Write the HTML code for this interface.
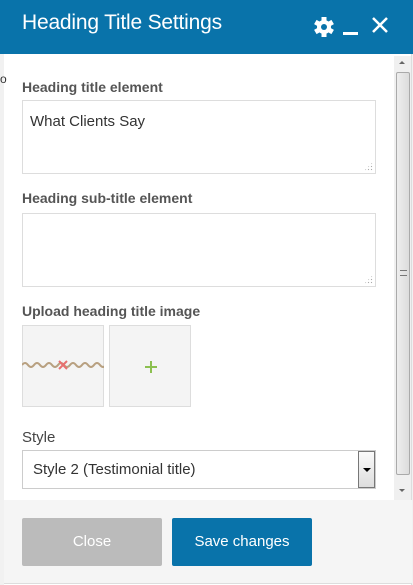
<!DOCTYPE html>
<html><head><meta charset="utf-8"><style>
*{box-sizing:border-box;margin:0;padding:0}
body{width:413px;height:585px;overflow:hidden;background:#f1f1f1;font-family:"Liberation Sans",sans-serif;position:relative}
.hdr{position:absolute;left:0;top:0;width:413px;height:54px;background:#0973aa}
.hdr h1{position:absolute;left:22px;top:11px;font-weight:normal;font-size:21px;color:#fff;letter-spacing:-0.2px}
.modal{position:absolute;left:4px;top:54px;width:408px;height:531px;background:#fff;border-right:1px solid #ddd}
.lbl{position:absolute;left:22px;font-size:14px;font-weight:bold;color:#555}
.ta{position:absolute;left:22px;width:354px;border:1px solid #ddd;background:#fff}
.grip{position:absolute;right:2px;bottom:2px;width:9px;height:9px;background:radial-gradient(circle,#aaa 0.7px,transparent 0.8px) 0 0/3px 3px;clip-path:polygon(100% 0,100% 100%,0 100%)}
.box{position:absolute;top:325px;width:82px;height:82px;background:#f4f4f4;border:1px solid #ddd}
.foot{position:absolute;left:4px;top:500px;width:408px;height:84px;background:#f5f5f5;border-bottom:1px solid #ddd}
.btn{position:absolute;top:518px;height:48px;border-radius:2px;color:#fff;font-size:15px;text-align:center;line-height:48px}
.sb{position:absolute;left:394px;top:56px;width:17px;height:444px;background:#f0f0f0}
.thumb{position:absolute;left:396px;top:72px;width:14px;height:403px;background:linear-gradient(90deg,#eee,#dcdcdc);border:1px solid #aaa;border-radius:2px}
</style></head><body>
<div class="hdr"><h1>Heading Title Settings</h1>
<svg style="position:absolute;left:313px;top:16px" width="22" height="22" viewBox="0 0 22 22"><g fill="#fff"><circle cx="11" cy="11" r="7"/><g transform="translate(11 11)"><rect x="-2.5" y="-10" width="5" height="20"/><rect x="-2.5" y="-10" width="5" height="20" transform="rotate(60)"/><rect x="-2.5" y="-10" width="5" height="20" transform="rotate(120)"/></g></g><circle cx="11" cy="11" r="3" fill="#0973aa"/></svg>
<div style="position:absolute;left:343px;top:32px;width:15px;height:3px;background:#fff"></div>
<svg style="position:absolute;left:372px;top:17px" width="16" height="16"><path d="M1 1L15 15M15 1L1 15" stroke="#fff" stroke-width="2.5"/></svg>
</div>
<div class="modal"></div>
<div style="position:absolute;left:0;top:72px;font-size:12px;color:#333">o</div>
<div class="lbl" style="top:79px">Heading title element</div>
<div class="ta" style="top:100px;height:74px"><div style="padding:12px 0 0 7px;font-size:15px;color:#333">What Clients Say</div><div class="grip"></div></div>
<div class="lbl" style="top:190px">Heading sub-title element</div>
<div class="ta" style="top:213px;height:74px"><div class="grip"></div></div>
<div class="lbl" style="top:303px">Upload heading title image</div>
<div class="box" style="left:22px"><svg width="82" height="82" style="position:absolute;left:-1px;top:-1px"><path d="M0 40 q3 -4 6 0 t6 0 t6 0 t6 0 t6 0 t6 0 t6 0 t6 0 t6 0 t6 0 t6 0 t6 0 t6 0 t6 0" stroke="#b8a080" stroke-width="2" fill="none"/><path d="M37 36l8 8M45 36l-8 8" stroke="#e87070" stroke-width="2"/></svg></div>
<div class="box" style="left:109px"><div style="position:absolute;left:35px;top:40px;width:12px;height:1.5px;background:#8cc050"></div><div style="position:absolute;left:40.3px;top:35px;width:1.5px;height:12px;background:#8cc050"></div></div>
<div class="lbl" style="top:429px;font-weight:normal;color:#444;font-size:15px">Style</div>
<div class="ta" style="top:450px;height:39px;border-color:#ccc"><div style="padding:10px 0 0 10px;font-size:15px;color:#333">Style 2 (Testimonial title)</div>
<div style="position:absolute;right:0;top:0;width:17px;height:37px;background:linear-gradient(#fafafa,#ddd);border:1px solid #777"><div style="position:absolute;left:4px;top:16px;border-left:4px solid transparent;border-right:4px solid transparent;border-top:4px solid #000"></div></div></div>
<div class="sb"></div><div class="thumb"><div style="position:absolute;left:3px;top:197px;width:7px;height:6px;border-top:1px solid #777;border-bottom:1px solid #777"></div></div>
<div style="position:absolute;left:399px;top:61px;border-left:3px solid transparent;border-right:3px solid transparent;border-bottom:3px solid #666"></div>
<div style="position:absolute;left:399px;top:489px;border-left:3px solid transparent;border-right:3px solid transparent;border-top:3px solid #666"></div>
<div class="foot"></div>
<div class="btn" style="left:22px;width:140px;background:#bbb">Close</div>
<div class="btn" style="left:172px;width:140px;background:#0973aa">Save changes</div>
</body></html>
